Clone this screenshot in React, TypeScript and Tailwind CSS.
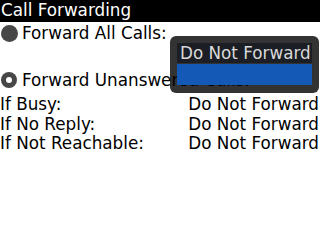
import React from 'react';

const rows = [
    { label: 'If Busy:', value: 'Do Not Forward' },
    { label: 'If No Reply:', value: 'Do Not Forward' },
    { label: 'If Not Reachable:', value: 'Do Not Forward' },
];

function Radio({ selected }: { selected: boolean }) {
    if (selected) {
        return (
            <span className="w-[16px] h-[16px] rounded-full bg-[#474747] flex items-center justify-center shrink-0">
                <span className="w-[6px] h-[6px] rounded-full bg-white" />
            </span>
        );
    }
    return <span className="w-[17px] h-[17px] rounded-full bg-[#474747] shrink-0" />;
}

export default function App() {
    return (
        <div
            className="relative w-[320px] h-[240px] overflow-hidden bg-white text-black text-[16.8px] leading-[20px]"
            style={{ fontFamily: '"DejaVu Sans", "Noto Sans", sans-serif' }}
        >
            <div className="h-[22px] bg-black text-white pl-[1px]">Call Forwarding</div>

            <div className="mt-[1px] h-[20px] flex items-center gap-[4px] pl-[1px]">
                <Radio selected={false} />
                <span>Forward All Calls:</span>
            </div>

            <div className="mt-[27px] h-[20px] flex items-center gap-[5px] pl-[1px]">
                <Radio selected={true} />
                <span className="whitespace-nowrap">Forward Unanswered Calls:</span>
            </div>

            <div className="mt-[5px] flex flex-col">
                {rows.map((row) => (
                    <div key={row.label} className="h-[19.5px] leading-[19.5px] flex justify-between pr-[1px]">
                        <span>{row.label}</span>
                        <span>{row.value}</span>
                    </div>
                ))}
            </div>

            {/* dropdown list */}
            <div className="absolute left-[170px] top-[36px] w-[149px] h-[57px] rounded-[6px] bg-black/80 px-[7px] pt-[7px]">
                <div className="h-[20px] bg-[#1b1e24] text-[#d9d9d9] pl-[3px] whitespace-nowrap overflow-hidden">Do Not Forward</div>
                <div className="mt-[1px] h-[21px] bg-[#1559b6]" />
            </div>
        </div>
    );
}
